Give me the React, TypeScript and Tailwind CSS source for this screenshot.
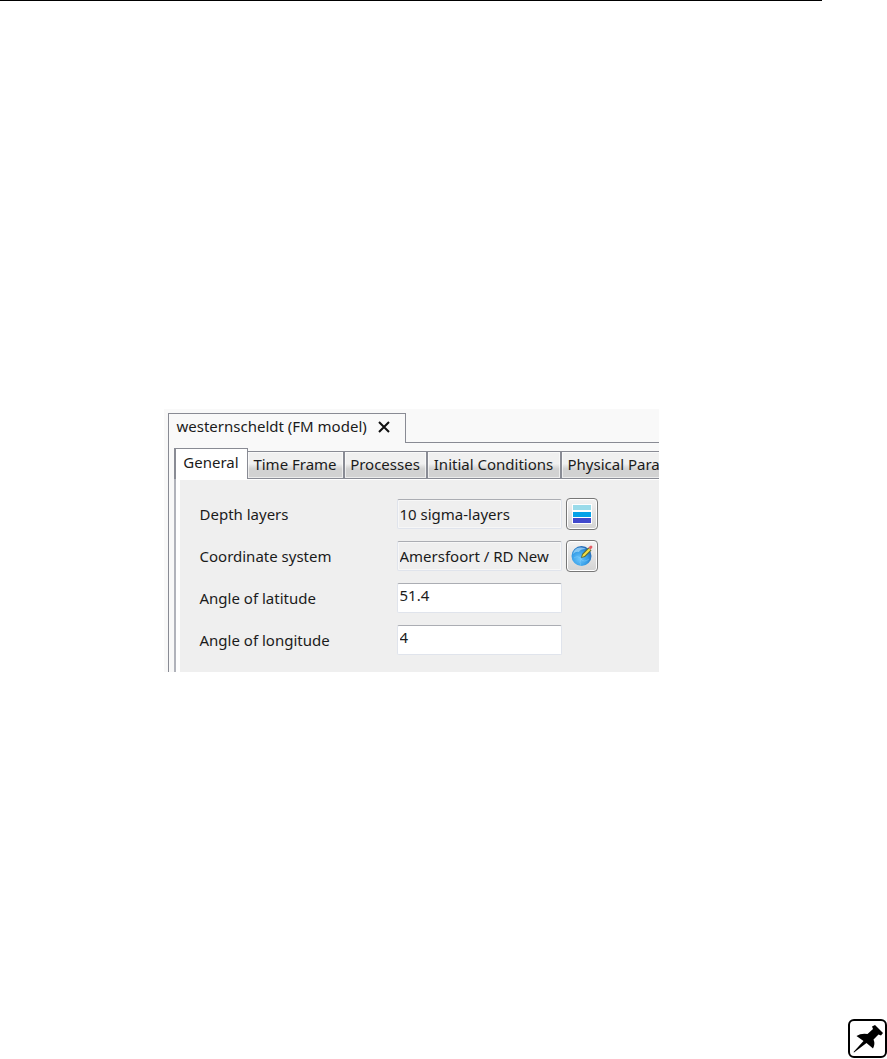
import { useState } from "react";

const tabs = [
  { label: "General", width: "w-[74px]" },
  { label: "Time Frame", width: "w-[97px]" },
  { label: "Processes", width: "w-[83px]" },
  { label: "Initial Conditions", width: "w-[134px]" },
  { label: "Physical Para", width: "grow pl-1.5 text-left" },
];

const fields = [
  { id: "depth", label: "Depth layers", value: "10 sigma-layers", readOnly: true, action: "Edit depth layers" },
  { id: "crs", label: "Coordinate system", value: "Amersfoort / RD New", readOnly: true, action: "Edit coordinate system" },
  { id: "latitude", label: "Angle of latitude", value: "51.4", readOnly: false },
  { id: "longitude", label: "Angle of longitude", value: "4", readOnly: false },
];

function LayersIcon() {
  return (
    <svg viewBox="0 0 20 20" className="size-5" aria-hidden="true">
      <path d="M0 0h20v20H0z" fill="#fff" />
      <path d="M1 1h18v5H1z" fill="#9adbea" />
      <path d="M1 8h18v5H1z" fill="#05a2e8" />
      <path d="M1 14h18v5H1z" fill="#4149cc" />
    </svg>
  );
}

function GlobeIcon() {
  return (
    <svg viewBox="0 0 22 22" className="size-[22px]" aria-hidden="true">
      <defs>
        <radialGradient id="globe" cx="40%" cy="65%" r="65%">
          <stop offset="0" stopColor="#6cc5fb" />
          <stop offset="0.6" stopColor="#379fe8" />
          <stop offset="1" stopColor="#2269b5" />
        </radialGradient>
      </defs>
      <circle cx="10.5" cy="11" r="10" fill="url(#globe)" />
      <path d="M2 9Q3 3 9 2.500Q13 2 15 4Q9 4 8 7Q5 6 2 9Z" fill="#a5dafa" opacity="0.75" />
      <path d="M3 13Q7 10 10 14T18 14M10 14Q8 17 10 21" fill="none" stroke="#97dcff" opacity="0.35" />
      <path d="M10 13l1-4 6.500-6.500 3 3-6.500 6.500z" fill="#5c6b35" />
      <path d="M11 12l1-2.500 6-6 1.500 1.500-6 6z" fill="#f4df45" />
      <path d="M17.500 2.500l1.500-1.500q1-1 2 0t0 2l-1.500 1.500z" fill="#e55c65" />
    </svg>
  );
}

function PinIcon() {
  return (
    <svg viewBox="0 0 35 35" className="size-[35px]" aria-hidden="true">
      <path
        d="M22 5.500L25 4L33 12L31 14.500L28.500 13.500L23.500 18.500Q25.500 23 23 27.500L16.500 22L4 31.500L3.500 31L13.500 20L6.500 15Q11 12 17.500 13L23 8Z"
        fill="#000"
      />
    </svg>
  );
}

export default function App() {
  const [active, setActive] = useState("General");

  return (
    <div className="flex min-h-screen flex-col bg-white font-['Noto_Sans','Open_Sans',sans-serif] text-[15px] text-[#1b1b1b]">
      <div className="pr-[65px]">
        <hr className="border-t border-black" />
        <main className="mx-auto mt-[408px] w-full max-w-[495px] overflow-hidden bg-[#f9f9f9] pt-1 pl-1">
          {/* Document tab */}
          <div className="flex h-[30px]">
            <div className="flex w-[238px] shrink-0 items-center border-t border-r border-l border-[#898b94] pb-1 pl-2">
              <span className="whitespace-nowrap">westernscheldt (FM model)</span>
              <button type="button" aria-label="Close" className="ml-2.5">
                <svg viewBox="0 0 14 14" className="size-[14px]" aria-hidden="true">
                  <path d="M2 2l10 10M12 2L2 12" stroke="#111" strokeWidth="2" />
                </svg>
              </button>
            </div>
            <div className="grow border-b border-[#898b94]" />
          </div>

          <div className="border-l border-[#898b94] pt-[5px] pl-[5px]">
            <div role="tablist" className="flex items-end">
              {tabs.map((tab) => (
                <button
                  key={tab.label}
                  type="button"
                  role="tab"
                  aria-selected={active === tab.label}
                  onClick={() => setActive(tab.label)}
                  className={`${tab.width} shrink-0 whitespace-nowrap border-t border-[#898b94] ${
                    active === tab.label
                      ? "h-[31px] border-r border-l-2 bg-white pb-1"
                      : "h-7 border-r-2 border-b bg-linear-to-b from-[#f0f0f0] from-45% to-[#d2d2d2] to-65% pb-0.5 inset-ring inset-ring-white/60 last:border-r-0"
                  }`}
                >
                  {tab.label}
                </button>
              ))}
            </div>

            <div className="border-l-2 border-[#b1b3bb] bg-white pt-px pl-1">
              <form className="flex flex-col gap-2 bg-[#efefef] pt-[17px] pb-[15px] pl-5">
                {fields.map((field) => (
                  <div key={field.id} className="flex h-[34px] items-center">
                    <label htmlFor={field.id} className="w-[197px] shrink-0">
                      {field.label}
                    </label>
                    <input
                      id={field.id}
                      defaultValue={field.value}
                      readOnly={field.readOnly}
                      className={`h-[30px] w-[165px] shrink-0 rounded-xs border border-[#e0e4ec] border-t-[#abadb3] px-0.5 outline-none ${
                        field.readOnly ? "bg-[#efefef] inset-ring inset-ring-[#f7f7f7]" : "bg-white pb-1.5"
                      }`}
                    />
                    {field.action && (
                      <button
                        type="button"
                        aria-label={field.action}
                        className="ml-1 flex size-8 shrink-0 items-center justify-center rounded-sm border border-[#777] bg-linear-to-b from-[#f3f3f3] to-[#d3d3d3] inset-ring inset-ring-white"
                      >
                        {field.id === "depth" ? <LayersIcon /> : <GlobeIcon />}
                      </button>
                    )}
                  </div>
                ))}
              </form>
            </div>
          </div>
        </main>
      </div>

      <footer className="mt-auto flex justify-end pb-px">
        <button
          type="button"
          aria-label="Pin"
          className="flex size-[39px] items-center justify-center rounded-md border-2 border-black bg-white"
        >
          <PinIcon />
        </button>
      </footer>
    </div>
  );
}
